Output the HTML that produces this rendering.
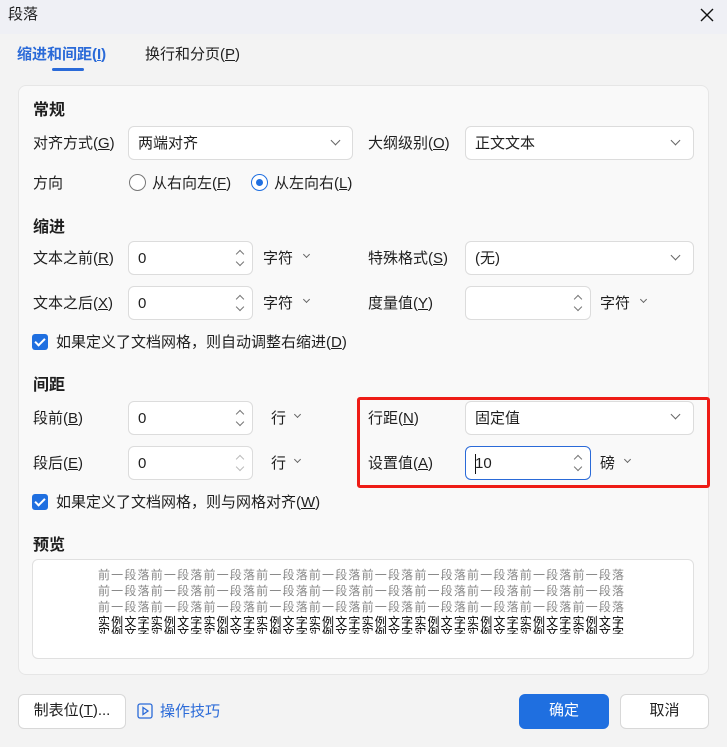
<!DOCTYPE html>
<html><head><meta charset="utf-8"><style>
*{box-sizing:border-box;margin:0;padding:0}
body{width:727px;height:747px;background:#f3f3f3;font-family:"Liberation Sans","Noto Sans CJK SC",sans-serif;font-size:15px;color:#1f1f1f;position:relative;overflow:hidden}
.a{position:absolute;white-space:nowrap;line-height:20px}
.title{position:absolute;left:0;top:0;width:727px;height:34px;background:#eff0f5}
.panel{position:absolute;left:18px;top:85px;width:691px;height:590px;background:#f9f9f9;border:1px solid #e6e6e6;border-radius:8px}
.box{position:absolute;background:#fff;border:1px solid #dcdcdc;border-radius:6px}
.b{font-weight:bold}
.chev{position:absolute;width:7px;height:7px;border-right:1.3px solid #666;border-bottom:1.3px solid #666;transform:rotate(45deg)}
.up{position:absolute;width:6px;height:6px;border-left:1.2px solid #777;border-top:1.2px solid #777;transform:rotate(45deg)}
.dn{position:absolute;width:6px;height:6px;border-right:1.2px solid #777;border-bottom:1.2px solid #777;transform:rotate(45deg)}
.cb{position:absolute;width:16px;height:16px;background:#1f6fe0;border-radius:3px}
.cb:after{content:"";position:absolute;left:5px;top:2px;width:4px;height:8px;border-right:2px solid #fff;border-bottom:2px solid #fff;transform:rotate(45deg)}
.btn{position:absolute;background:#fff;border:1px solid #d8d8d8;border-radius:6px;text-align:center;line-height:32px}
.pv{position:absolute;left:98px;font-size:12px;line-height:16px;letter-spacing:1.18px;white-space:nowrap}
u{text-decoration:underline}
</style></head><body>
<div class="title"></div>
<div class="a" style="left:8px;top:5px">段落</div>
<svg class="a" style="left:700px;top:8px" width="14" height="14"><path d="M1 1L13 13M13 1L1 13" stroke="#111" stroke-width="1.4"/></svg>
<div class="a b" style="left:17px;top:45px;color:#2a6ad8">缩进和间距(<u>I</u>)</div>
<div style="position:absolute;left:52px;top:68px;width:32px;height:3px;background:#2a6ad8;border-radius:2px"></div>
<div class="a" style="left:145px;top:45px">换行和分页(<u>P</u>)</div>
<div class="panel"></div>

<div class="a b" style="left:33px;top:101px;font-size:16px">常规</div>
<div class="a" style="left:33px;top:134px">对齐方式(<u>G</u>)</div>
<div class="box" style="left:128px;top:126px;width:225px;height:34px"></div><div class="a" style="left:138px;top:134px">两端对齐</div><div class="chev" style="left:332px;top:137px"></div>
<div class="a" style="left:368px;top:134px">大纲级别(<u>O</u>)</div>
<div class="box" style="left:465px;top:126px;width:229px;height:34px"></div><div class="a" style="left:475px;top:134px">正文文本</div><div class="chev" style="left:672px;top:137px"></div>
<div class="a" style="left:33px;top:174px">方向</div>
<div style="position:absolute;left:129px;top:174px;width:17px;height:17px;border:1.3px solid #777;border-radius:50%;background:#fff"></div>
<div class="a" style="left:152px;top:174px">从右向左(<u>F</u>)</div>
<div style="position:absolute;left:251px;top:174px;width:17px;height:17px;border:1.5px solid #1f6fe0;border-radius:50%;background:#fff"></div>
<div style="position:absolute;left:256px;top:179px;width:7px;height:7px;border-radius:50%;background:#1f6fe0"></div>
<div class="a" style="left:274px;top:174px">从左向右(<u>L</u>)</div>

<div class="a b" style="left:33px;top:218px;font-size:16px">缩进</div>
<div class="a" style="left:33px;top:249px">文本之前(<u>R</u>)</div>
<div class="box" style="left:128px;top:241px;width:125px;height:34px"></div><div class="a" style="left:138px;top:249px">0</div><div class="up" style="left:237px;top:251px"></div><div class="dn" style="left:237px;top:259px"></div>
<div class="a" style="left:263px;top:249px">字符</div><div class="chev" style="left:304px;top:252px;width:5px;height:5px"></div>
<div class="a" style="left:368px;top:249px">特殊格式(<u>S</u>)</div>
<div class="box" style="left:465px;top:241px;width:229px;height:34px"></div><div class="a" style="left:475px;top:249px">(无)</div><div class="chev" style="left:672px;top:252px"></div>
<div class="a" style="left:33px;top:294px">文本之后(<u>X</u>)</div>
<div class="box" style="left:128px;top:286px;width:125px;height:34px"></div><div class="a" style="left:138px;top:294px">0</div><div class="up" style="left:237px;top:296px"></div><div class="dn" style="left:237px;top:304px"></div>
<div class="a" style="left:263px;top:294px">字符</div><div class="chev" style="left:304px;top:297px;width:5px;height:5px"></div>
<div class="a" style="left:368px;top:294px">度量值(<u>Y</u>)</div>
<div class="box" style="left:465px;top:286px;width:126px;height:34px"></div><div class="up" style="left:575px;top:296px"></div><div class="dn" style="left:575px;top:304px"></div>
<div class="a" style="left:600px;top:294px">字符</div><div class="chev" style="left:641px;top:297px;width:5px;height:5px"></div>
<div class="cb" style="left:32px;top:334px"></div>
<div class="a" style="left:56px;top:333px">如果定义了文档网格，则自动调整右缩进(<u>D</u>)</div>

<div class="a b" style="left:33px;top:376px;font-size:16px">间距</div>
<div class="a" style="left:33px;top:409px">段前(<u>B</u>)</div>
<div class="box" style="left:128px;top:401px;width:125px;height:34px"></div><div class="a" style="left:138px;top:409px">0</div><div class="up" style="left:237px;top:411px"></div><div class="dn" style="left:237px;top:419px"></div>
<div class="a" style="left:271px;top:409px">行</div><div class="chev" style="left:295px;top:412px;width:5px;height:5px"></div>
<div class="a" style="left:33px;top:454px">段后(<u>E</u>)</div>
<div class="box" style="left:128px;top:446px;width:125px;height:34px"></div><div class="a" style="left:138px;top:454px">0</div><div class="up" style="left:237px;top:456px;border-color:#bbb"></div><div class="dn" style="left:237px;top:464px;border-color:#bbb"></div>
<div class="a" style="left:271px;top:454px">行</div><div class="chev" style="left:295px;top:457px;width:5px;height:5px"></div>
<div class="a" style="left:368px;top:409px">行距(<u>N</u>)</div>
<div class="box" style="left:465px;top:401px;width:229px;height:34px"></div><div class="a" style="left:475px;top:409px">固定值</div><div class="chev" style="left:672px;top:411px"></div>
<div class="a" style="left:368px;top:454px">设置值(<u>A</u>)</div>
<div class="box" style="left:465px;top:446px;width:126px;height:34px;border-color:#2a6ad8"></div><div class="a" style="left:475px;top:454px">10</div><div style="position:absolute;left:475px;top:454px;width:1px;height:20px;background:#111"></div><div class="up" style="left:575px;top:456px"></div><div class="dn" style="left:575px;top:464px"></div>
<div class="a" style="left:600px;top:454px">磅</div><div class="chev" style="left:625px;top:457px;width:5px;height:5px"></div>
<div style="position:absolute;left:357px;top:397px;width:353px;height:91px;border:3px solid #ee1c16;border-radius:3px"></div>
<div class="cb" style="left:32px;top:494px"></div>
<div class="a" style="left:56px;top:493px">如果定义了文档网格，则与网格对齐(<u>W</u>)</div>

<div class="a b" style="left:33px;top:536px;font-size:16px">预览</div>
<div class="box" style="left:32px;top:559px;width:662px;height:100px;border-color:#e0e0e0"></div>
<div style="position:absolute;left:0;top:0;width:727px;height:634px;overflow:hidden">
<div class="pv" style="top:567px;color:#888">前一段落前一段落前一段落前一段落前一段落前一段落前一段落前一段落前一段落前一段落</div>
<div class="pv" style="top:583px;color:#888">前一段落前一段落前一段落前一段落前一段落前一段落前一段落前一段落前一段落前一段落</div>
<div class="pv" style="top:599px;color:#888">前一段落前一段落前一段落前一段落前一段落前一段落前一段落前一段落前一段落前一段落</div>
<div class="pv" style="top:614px;color:#000">实例文字实例文字实例文字实例文字实例文字实例文字实例文字实例文字实例文字实例文字</div>
<div class="pv" style="top:625px;color:#000">实例文字实例文字实例文字实例文字实例文字实例文字实例文字实例文字实例文字实例文字</div>
</div>

<div class="btn" style="left:18px;top:694px;width:108px;height:35px">制表位(<u>T</u>)...</div>
<svg class="a" style="left:137px;top:703px" width="16" height="16"><rect x="1" y="1" width="14" height="14" rx="2" fill="none" stroke="#2a6ad8" stroke-width="1.3"/><path d="M6 4.5L11 8L6 11.5Z" fill="none" stroke="#2a6ad8" stroke-width="1.3"/></svg>
<div class="a" style="left:160px;top:702px;color:#2a6ad8">操作技巧</div>
<div class="btn" style="left:519px;top:694px;width:90px;height:35px;background:#1f6fe0;border-color:#1f6fe0;color:#fff">确定</div>
<div class="btn" style="left:620px;top:694px;width:89px;height:35px">取消</div>
</body></html>
